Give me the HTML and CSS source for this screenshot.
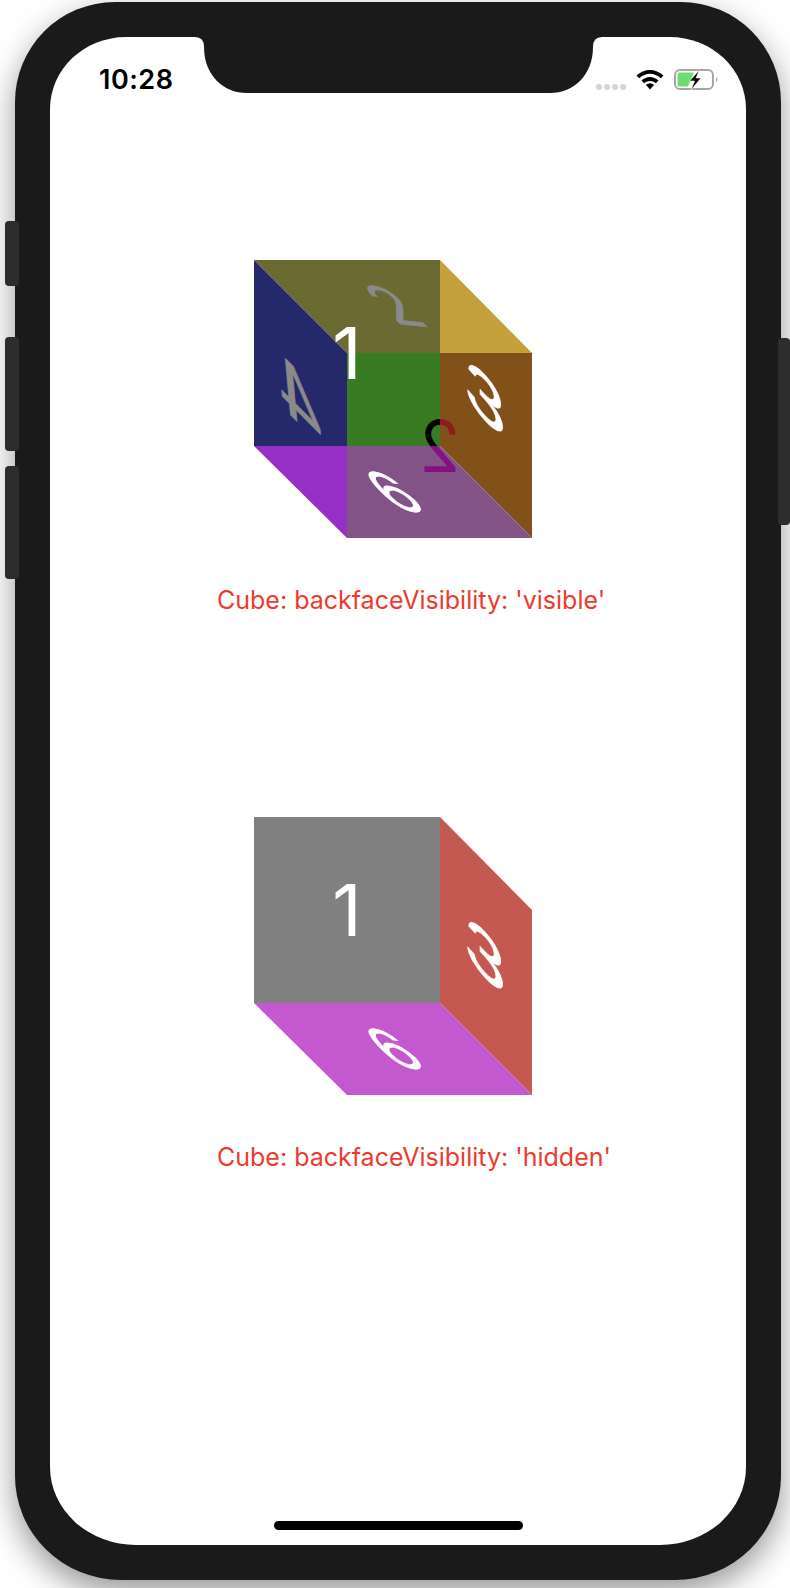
FILE: index.html
```html
<!DOCTYPE html>
<html lang="en">
<head>
<meta charset="utf-8">
<title>Cube</title>
<link rel="stylesheet" href="styles.css">
</head>
<body>
<div class="phone">
  <span class="btn btn-mute"></span>
  <span class="btn btn-up"></span>
  <span class="btn btn-down"></span>
  <span class="btn btn-power"></span>
  <main class="screen">
    <svg class="notch" viewBox="0 0 427 56" aria-hidden="true">
      <path d="M0 0H10Q19 0 19 10C19 38 38 56 62 56H365C389 56 408 38 408 10Q408 0 417 0H427V-1H0Z"/>
    </svg>
    <header class="status">
      <span class="time">10:28</span>
      <div class="status-right">
        <div class="dots"><i></i><i></i><i></i><i></i></div>
        <svg class="wifi" viewBox="0 0 28 21" aria-hidden="true">
          <path d="M0.5 6.5C8 -1 20 -1 27.500 6.500L24.800 9.300C18.500 3.300 9.500 3.300 3.200 9.300Z"/>
          <path d="M5.500 11.500C10.500 6.800 17.500 6.800 22.500 11.500L19.800 14.200C16.500 11.300 11.500 11.300 8.200 14.200Z"/>
          <path d="M9.800 15.800C12.500 13.800 15.500 13.800 18.200 15.800L14 20.500Z"/>
        </svg>
        <svg class="battery" viewBox="0 0 46 21" aria-hidden="true">
          <rect class="bat-shell" x="1" y="1" width="38" height="19" rx="5"/>
          <path class="bat-nub" d="M42 8Q45 10.500 42 13Z"/>
          <path class="bat-fill" d="M5 3.500H20L14 17.500H5Q3.500 17.500 3.500 16V5Q3.500 3.500 5 3.500Z"/>
          <path class="bat-bolt" d="M25.500 1L15.500 12H20.500L17 21L27 9H22Z"/>
        </svg>
      </div>
    </header>

    <section class="demo demo-first">
      <svg class="cube" viewBox="0 0 278 278" role="img" aria-label="Cube with visible back faces">
        <defs>
          <clipPath id="clip-green"><polygon points="93,93 186,93 186,186 93,186"/></clipPath>
          <clipPath id="clip-brown"><polygon points="186,93 278,93 278,278 186,186"/></clipPath>
          <clipPath id="clip-mauve"><polygon points="93,186 186,186 278,278 93,278"/></clipPath>
        </defs>
        <polygon class="f-olive" points="0,0 186,0 186,93 93,93"/>
        <polygon class="f-navy" points="0,0 93,93 93,186 0,186"/>
        <polygon class="f-gold" points="186,0 278,93 186,93"/>
        <polygon class="f-green" points="93,93 186,93 186,186 93,186"/>
        <polygon class="f-brown" points="186,93 278,93 278,278 186,186"/>
        <polygon class="f-violet" points="0,186 93,186 93,278"/>
        <polygon class="f-mauve" points="93,186 186,186 278,278 93,278"/>
        <g clip-path="url(#clip-green)"><text class="digit d-black" transform="matrix(-0.93 0 0 1 186 186)" y="26">2</text></g>
        <g clip-path="url(#clip-brown)"><text class="digit d-red" transform="matrix(-0.93 0 0 1 186 186)" y="26">2</text></g>
        <g clip-path="url(#clip-mauve)"><text class="digit d-purple" transform="matrix(-0.93 0 0 1 186 186)" y="26">2</text></g>
        <text class="digit d-grey sheared" transform="matrix(0.8 0.08 0.75 0.75 140 46)" y="26">2</text>
        <text class="digit d-grey sheared" transform="matrix(-1 -1 0.1 1.08 46 139)" y="26">4</text>
        <text class="digit d-white sheared" transform="matrix(0.97 1.05 0 0.85 231 138)" y="26">3</text>
        <text class="digit d-white sheared" transform="matrix(0.78 0.08 0.75 0.75 140 232)" y="26">6</text>
        <text class="digit d-white" transform="translate(93 93)" y="26">1</text>
      </svg>
      <p class="caption">Cube: backfaceVisibility: 'visible'</p>
    </section>

    <section class="demo demo-second">
      <svg class="cube" viewBox="0 0 278 278" role="img" aria-label="Cube with hidden back faces">
        <rect class="f-grey" width="186" height="186"/>
        <polygon class="f-red" points="186,0 278,93 278,278 186,186"/>
        <polygon class="f-pink" points="0,186 186,186 278,278 93,278"/>
        <text class="digit d-white sheared" transform="matrix(0.97 1.05 0 0.85 231 138)" y="26">3</text>
        <text class="digit d-white sheared" transform="matrix(0.78 0.08 0.75 0.75 140 232)" y="26">6</text>
        <text class="digit d-white" transform="translate(93 93)" y="26">1</text>
      </svg>
      <p class="caption">Cube: backfaceVisibility: 'hidden'</p>
    </section>

    <div class="home"></div>
  </main>
</div>
</body>
</html>
```
FILE: styles.css
```css
* { box-sizing: border-box; }
html, body { margin: 0; height: 100%; }
body {
  background: #fff;
  width: 790px;
  height: 1588px;
  overflow: hidden;
  padding: 2px 9px 8px 15px;
  font-family: Inter, "Liberation Sans", sans-serif;
}
.phone {
  position: relative;
  width: 766px;
  height: 1578px;
  padding: 35px 35px;
  background: #1a1a1a;
  border-radius: 100px 100px 106px 106px / 100px 100px 104px 104px;
  box-shadow: 0 12px 32px rgba(0, 0, 0, .42);
}
.btn {
  position: absolute;
  width: 14px;
  background: #2d2d2d;
  border-radius: 4px;
}
.btn-mute { left: -10px; top: 219px; height: 65px; }
.btn-up { left: -10px; top: 335px; height: 114px; }
.btn-down { left: -10px; top: 464px; height: 113px; }
.btn-power { right: -9px; top: 336px; height: 187px; width: 12px; }
.screen {
  position: relative;
  height: 1508px;
  background: #fff;
  border-radius: 76px 76px 86px 86px / 72px 72px 78px 78px;
  overflow: hidden;
  display: flex;
  flex-direction: column;
}
.notch {
  position: absolute;
  left: 135px;
  top: 0;
  width: 427px;
  height: 56px;
  fill: #1a1a1a;
  overflow: visible;
}
.status {
  display: flex;
  justify-content: space-between;
  align-items: flex-start;
  height: 223px;
  padding: 30px 26px 0 49px;
}
.time {
  font-size: 27px;
  font-weight: 600;
  letter-spacing: .5px;
  line-height: 26px;
  color: #000;
}
.status-right {
  display: flex;
  align-items: flex-start;
  gap: 10px;
  padding-top: 2px;
}
.dots {
  display: flex;
  gap: 2px;
  margin-top: 15px;
}
.dots i {
  width: 6px;
  height: 6px;
  border-radius: 50%;
  background: #d4d4d4;
}
.wifi { width: 28px; height: 21px; fill: #000; }
.battery { width: 46px; height: 21px; }
.bat-shell { fill: none; stroke: #a6a6a6; stroke-width: 2; }
.bat-nub { fill: #a6a6a6; }
.bat-fill { fill: #6fdc72; }
.bat-bolt { fill: #000; stroke: #fff; stroke-width: .6; }
.demo {
  display: flex;
  flex-direction: column;
  align-items: flex-start;
}
.demo-second { margin-top: 202px; }
.cube {
  width: 278px;
  height: 278px;
  margin-left: 204px;
}
.caption {
  margin: 47px 0 0 167px;
  font-size: 25px;
  line-height: 30px;
  color: #ee3a2e;
  white-space: nowrap;
}
.home {
  position: absolute;
  left: 224px;
  bottom: 15px;
  width: 249px;
  height: 9px;
  border-radius: 5px;
  background: #000;
}
.digit {
  font-family: Inter, "Liberation Sans", sans-serif;
  font-size: 72px;
  text-anchor: middle;
}
.d-white { fill: #fff; }
.d-grey { fill: #8a8a8a; }
.d-black { fill: #000; }
.d-red { fill: #8e1c1c; }
.d-purple { fill: #85107f; }
.d-white.sheared { stroke: #fff; stroke-width: .8; }
.d-grey.sheared { stroke: #8a8a8a; stroke-width: .8; }
.f-olive { fill: #6c6a33; }
.f-navy { fill: #25286a; }
.f-gold { fill: #c3a03b; }
.f-green { fill: #387b23; }
.f-brown { fill: #82511a; }
.f-violet { fill: #9430c3; }
.f-mauve { fill: #835388; }
.f-grey { fill: #808080; }
.f-red { fill: #c65852; }
.f-pink { fill: #c458cf; }
```
